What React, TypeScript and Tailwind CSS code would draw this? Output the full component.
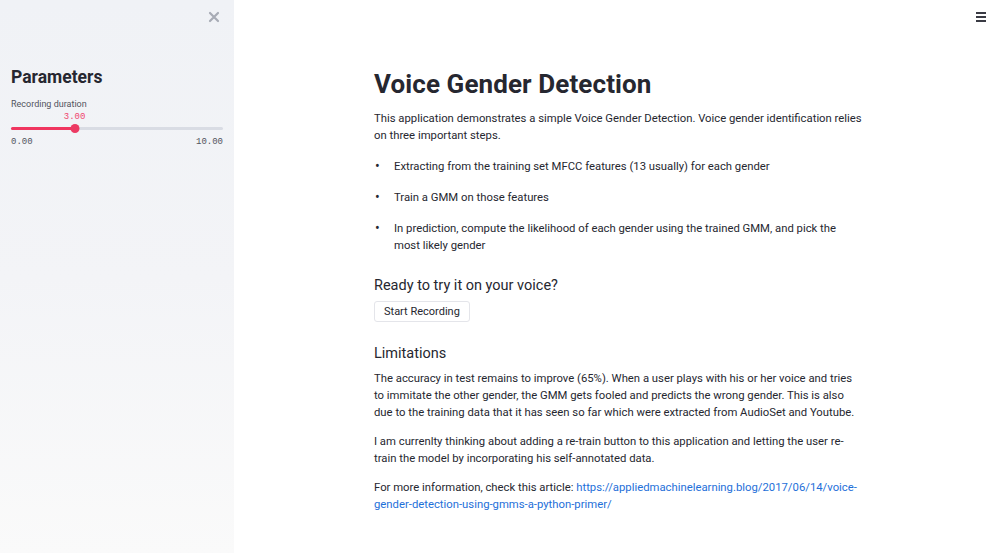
import React from 'react';

const SANS = { fontFamily: '"Roboto", "Noto Sans", sans-serif' };
const MONO = { fontFamily: '"Liberation Mono", "DejaVu Sans Mono", monospace' };

function Sidebar() {
  const value = 3;
  const pct = (value / 10) * 100;
  return (
    <aside className="w-[234px] h-[553px] shrink-0 bg-gradient-to-b from-[#f0f2f6] via-[#f3f4f7] to-[#fafafa] flex flex-col">
      <div className="flex justify-end pt-[11px] pr-[14px]">
        <svg width="12" height="12" viewBox="0 0 12 12" className="text-[#a7abb5]">
          <path d="M2 2 L10 10 M10 2 L2 10" stroke="currentColor" strokeWidth="2.2" strokeLinecap="round" />
        </svg>
      </div>
      <div className="px-[11px] pt-[46px]">
        <h2 className="text-[17.5px] font-bold leading-none text-[#262730]" style={SANS}>Parameters</h2>
        <div className="mt-[11px] text-[9px] leading-[13px] text-[#51535d]" style={SANS}>Recording duration</div>
        <div className="relative h-[21px]">
          <div className="absolute text-[9px] leading-[11px] text-[#f0456e] -translate-x-1/2 top-[1px]" style={{ ...MONO, left: `${pct}%` }}>3.00</div>
          <div className="absolute left-0 right-0 top-[16px] h-[3px] rounded-full bg-[#d9dce4]" />
          <div className="absolute left-0 top-[16px] h-[3px] rounded-full bg-[#f0355f]" style={{ width: `${pct}%` }} />
          <div className="absolute top-[13px] w-[9px] h-[9px] rounded-full bg-[#ec3a63] -translate-x-1/2" style={{ left: `${pct}%` }} />
        </div>
        <div className="flex justify-between text-[9px] leading-[11px] text-[#51535d] mt-[5px]" style={MONO}>
          <span>0.00</span>
          <span>10.00</span>
        </div>
      </div>
    </aside>
  );
}

function Bullet({ children }: { children: React.ReactNode }) {
  return (
    <li className="flex">
      <span className="w-[20px] shrink-0 text-[14px] leading-[17px] pl-[1px]">•</span>
      <span>{children}</span>
    </li>
  );
}

export default function App() {
  return (
    <div className="flex w-[1000px] h-[553px] bg-white text-[#262730] overflow-hidden" style={SANS}>
      <Sidebar />
      <main className="flex-1 relative">
        <div className="absolute right-[14px] top-[12px] flex flex-col gap-[2.5px]">
          <span className="block w-[10px] h-[1.5px] bg-[#3a3b44]" />
          <span className="block w-[10px] h-[1.5px] bg-[#3a3b44]" />
          <span className="block w-[10px] h-[1.5px] bg-[#3a3b44]" />
        </div>
        <div className="ml-[140px] w-[494px] pt-[69px] text-[11.3px] leading-[17px]">
          <h1 className="text-[26px] font-bold leading-[31px] tracking-[0.1px]">Voice Gender Detection</h1>
          <p className="mt-[10px]">
            This application demonstrates a simple Voice Gender Detection. Voice gender identification relies<br />
            on three important steps.
          </p>
          <ul className="mt-[14px] flex flex-col gap-[14px]">
            <Bullet>Extracting from the training set MFCC features (13 usually) for each gender</Bullet>
            <Bullet>Train a GMM on those features</Bullet>
            <Bullet>
              In prediction, compute the likelihood of each gender using the trained GMM, and pick the<br />
              most likely gender
            </Bullet>
          </ul>
          <h3 className="mt-[22px] text-[14.5px] leading-[20px] font-normal">Ready to try it on your voice?</h3>
          <button className="mt-[5px] h-[21px] px-[9px] border border-[#e4e5ea] rounded-[3px] bg-white text-[11px] leading-none">Start Recording</button>
          <h3 className="mt-[22px] text-[14.5px] leading-[20px] font-normal">Limitations</h3>
          <p className="mt-[6px]">
            The accuracy in test remains to improve (65%). When a user plays with his or her voice and tries<br />
            to immitate the other gender, the GMM gets fooled and predicts the wrong gender. This is also<br />
            due to the training data that it has seen so far which were extracted from AudioSet and Youtube.
          </p>
          <p className="mt-[12px]">
            I am currenlty thinking about adding a re-train button to this application and letting the user re-<br />
            train the model by incorporating his self-annotated data.
          </p>
          <p className="mt-[12px]">
            For more information, check this article:{' '}
            <a className="text-[#1e6fd9]" href="#">
              https://appliedmachinelearning.blog/2017/06/14/voice-<br />
              gender-detection-using-gmms-a-python-primer/
            </a>
          </p>
        </div>
      </main>
    </div>
  );
}
